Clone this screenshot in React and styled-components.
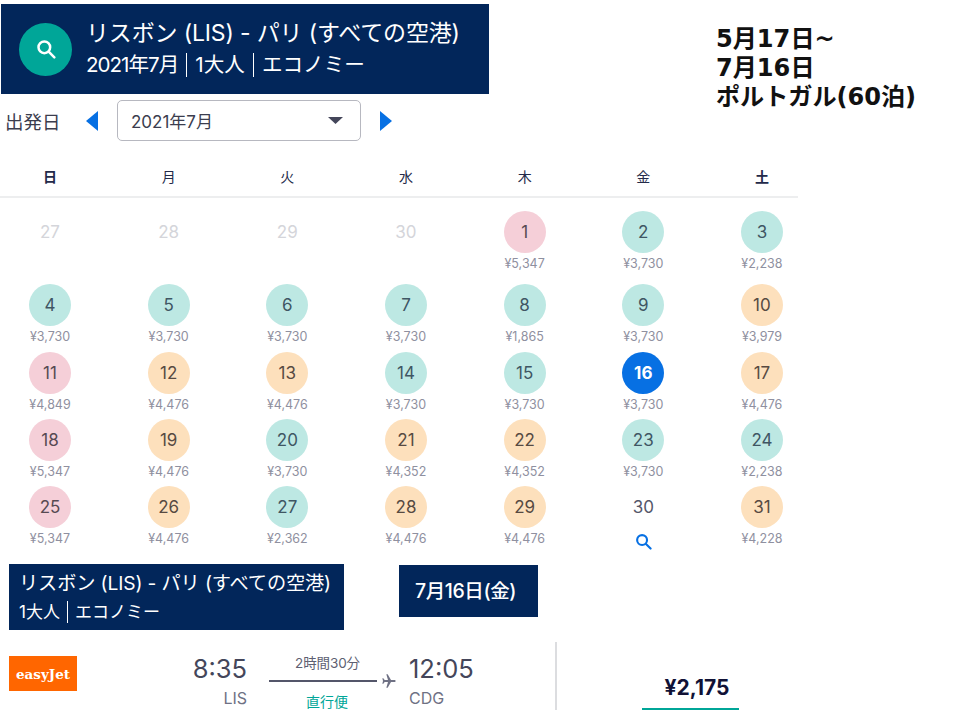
import React from "react";
import styled, { createGlobalStyle } from "styled-components";

const Global = createGlobalStyle`
  html, body { margin: 0; padding: 0; background: #fff; }
  body { font-family: Inter, "Noto Sans CJK JP", sans-serif; color: #3b3d4e; }
`;
const Page = styled.div`
  width: 960px; height: 720px; overflow: hidden; display: flex; flex-direction: column;
`;
const Top = styled.div`display: flex; align-items: flex-start;`;
const TopLeft = styled.div`width: 489px; padding-top: 4px; display: flex; flex-direction: column;`;
const Banner = styled.header`
  margin-left: 1px; height: 90px; background: #02265a; color: #fff; display: flex; align-items: center; padding-left: 18px; box-sizing: border-box;
`;
const SearchDisc = styled.div`
  width: 53px; height: 53px; border-radius: 50%; background: #00a698; display: flex; align-items: center; justify-content: center; margin-right: 14px; flex: none;
`;
const Titles = styled.div`display: flex; flex-direction: column;`;
const Title = styled.div`font-size: ${p => p.$size}px; line-height: ${p => p.$lh}px; white-space: nowrap; letter-spacing: ${p => p.$ls || 0}px; margin-left: ${p => p.$ml || 0}px;`;
const Sub = styled.div`display: flex; align-items: center; font-size: ${p => p.$size}px; line-height: ${p => p.$lh}px; white-space: nowrap; margin-left: ${p => p.$ml || 0}px;`;
const SubNum = styled.span`letter-spacing: -1px;`;
const Sep = styled.span`width: 1px; height: ${p => p.$h}px; background: #fff; margin: 0 ${p => p.$m}px;`;
const Toolbar = styled.div`display: flex; align-items: center; height: 41px; margin-top: 6px; padding-left: 5px;`;
const DepLabel = styled.span`font-size: 18.5px; width: 81px; color: #3b3d4e;`;
const Arrow = styled.svg`display: block; flex: none;`;
const Select = styled.div`
  width: 244px; height: 41px; box-sizing: border-box; margin: 0 19px; border: 1px solid #b7b8c0; border-radius: 5px; display: flex; align-items: center; justify-content: space-between; padding: 0 17px 0 13px; font-size: 17px; background: #fff;
`;
const Note = styled.div`
  margin: 25px 0 0 227px; font-size: 24.1px; font-weight: 700; line-height: 29px; color: #111; font-family: "DejaVu Sans", "Noto Sans CJK JP", sans-serif; white-space: nowrap;
`;
const Calendar = styled.section`width: 798px;`;
const WeekRow = styled.div`
  display: grid; grid-template-columns: repeat(7, 72px); column-gap: 46.67px; padding-left: 14px; box-sizing: border-box; height: 57px; align-items: center; padding-top: 15px; border-bottom: 2px solid #edeeef;
`;
const Wd = styled.div`text-align: center; font-size: 14px; font-weight: ${p => (p.$strong ? 700 : 400)}; color: #232a4a;`;
const Grid = styled.div`
  display: grid; grid-template-columns: repeat(7, 72px); column-gap: 46.67px; padding: 13px 0 0 14px; grid-template-rows: 73px 68px 67px 67px 67px;
`;
const Cell = styled.div`display: flex; flex-direction: column; align-items: center;`;
const Disc = styled.div`
  width: 42px; height: 42px; border-radius: 50%; display: flex; align-items: center; justify-content: center; font-size: 17px;
  background: ${p => p.$bg}; color: ${p => p.$fg}; font-weight: ${p => (p.$fg === "#fff" ? 700 : 400)};
`;
const Price = styled.div`font-size: 12.5px; line-height: 16px; margin-top: 3px; color: #8f90a0;`;
const SearchSlot = styled.div`height: 16px; margin-top: 5px;`;
const Bottom = styled.div`display: flex; align-items: flex-start; margin-top: 11px; padding-left: 9px;`;
const Banner2 = styled.div`
  width: 335px; height: 66px; background: #02265a; color: #fff; box-sizing: border-box; padding: 5px 0 0 10px;
`;
const DateBox = styled.div`
  width: 139px; height: 52px; box-sizing: border-box; padding: 0 6px 4px 0; margin: 1px 0 0 55px; background: #02265a; color: #fff; display: flex; align-items: center; justify-content: center; font-size: 19.5px; font-weight: 500; letter-spacing: -0.4px;
`;
const Flight = styled.div`display: flex; align-items: flex-start; padding-left: 9px; margin-top: 12px; height: 68px;`;
const Logo = styled.div`
  width: 68px; height: 35px; margin-top: 14px; background: #ff6600; color: #fff; display: flex; align-items: center; justify-content: center; font-family: "DejaVu Serif", serif; font-weight: 700; font-size: 13.5px; flex: none;
`;
const Times = styled.div`display: flex; margin-left: 110px; flex: none;`;
const TimeCol = styled.div`display: flex; flex-direction: column; align-items: ${p => p.$a}; width: ${p => p.$w}px;`;
const Clock = styled.div`font-size: 25.5px; line-height: 30px; margin-top: 12px; color: #44465a;`;
const Iata = styled.div`font-size: 16px; line-height: 20px; margin-top: 4px; color: #6f7184;`;
const Mid = styled.div`display: flex; flex-direction: column; align-items: flex-start; margin: 0 0 0 22px; width: 140px;`;
const Dur = styled.div`font-size: 13.5px; line-height: 16px; margin: 13px 0 0 26px; color: #5d5f72; letter-spacing: -0.1px;`;
const LineRow = styled.div`display: flex; align-items: center; height: 16px; margin-top: 2px;`;
const Line = styled.div`width: 108px; height: 2px; background: #54566a; margin-right: 4px;`;
const Direct = styled.div`font-size: 14px; line-height: 18px; margin: 4px 0 0 37px; color: #00a698;`;
const Divider = styled.div`width: 2px; height: 68px; background: #dcdde0; flex: none;`;
const Fare = styled.div`display: flex; flex-direction: column; align-items: center; width: 97px; margin-left: 85px; flex: none;`;
const Amount = styled.div`font-size: 21px; font-weight: 700; line-height: 26px; margin-top: 33px; padding-left: 13px; color: #111236;`;
const FareLine = styled.div`width: 97px; height: 2px; background: #00a698; margin-top: 7px;`;

const T = { bg: "#bde8e3", fg: "#3f5663" };
const O = { bg: "#fde0bc", fg: "#574a42" };
const P = { bg: "#f5cfd8", fg: "#574a52" };
const days = [
  [27], [28], [29], [30], [1, P, "5,347"], [2, T, "3,730"], [3, T, "2,238"],
  [4, T, "3,730"], [5, T, "3,730"], [6, T, "3,730"], [7, T, "3,730"], [8, T, "1,865"], [9, T, "3,730"], [10, O, "3,979"],
  [11, P, "4,849"], [12, O, "4,476"], [13, O, "4,476"], [14, T, "3,730"], [15, T, "3,730"], [16, { bg: "#0770e3", fg: "#fff" }, "3,730"], [17, O, "4,476"],
  [18, P, "5,347"], [19, O, "4,476"], [20, T, "3,730"], [21, O, "4,352"], [22, O, "4,352"], [23, T, "3,730"], [24, T, "2,238"],
  [25, P, "5,347"], [26, O, "4,476"], [27, T, "2,362"], [28, O, "4,476"], [29, O, "4,476"], [30, { bg: "transparent", fg: "#55576a" }, null, true], [31, O, "4,228"],
];
const Loupe = ({ size, color, sw }) => (
  <svg width={size} height={size} viewBox="0 0 24 24" fill="none" stroke={color} strokeWidth={sw} strokeLinecap="round">
    <circle cx="10" cy="10" r="7" />
    <path d="M15.5 15.5L22 22" />
  </svg>
);
const WEEK = ["日", "月", "火", "水", "木", "金", "土"];

export default function App() {
  return (
    <Page>
      <Global />
      <Top>
        <TopLeft>
          <Banner>
            <SearchDisc><Loupe size={20} color="#fff" sw={3} /></SearchDisc>
            <Titles>
              <Title $size={23} $lh={32} $ls={-0.15}>リスボン (LIS) - パリ (すべての空港)</Title>
              <Sub $size={20.6} $lh={32}><SubNum>2021年7月</SubNum><Sep $h={24} $m={8} />1大人<Sep $h={24} $m={8} />エコノミー</Sub>
            </Titles>
          </Banner>
          <Toolbar>
            <DepLabel>出発日</DepLabel>
            <Arrow width="12" height="20" viewBox="0 0 12 20"><path d="M12 0V20L0 10Z" fill="#0770e3" /></Arrow>
            <Select>
              2021年7月
              <svg width="15" height="7" viewBox="0 0 15 7"><path d="M0 0H15L7.500 7Z" fill="#44465a" /></svg>
            </Select>
            <Arrow width="12" height="20" viewBox="0 0 12 20"><path d="M0 0V20L12 10Z" fill="#0770e3" /></Arrow>
          </Toolbar>
        </TopLeft>
        <Note>5月17日~<br />7月16日<br />ポルトガル(60泊)</Note>
      </Top>
      <Calendar>
        <WeekRow>
          {WEEK.map((w, i) => <Wd key={w} $strong={i === 0 || i === 6}>{w}</Wd>)}
        </WeekRow>
        <Grid>
          {days.map(([n, tone, price, search], i) => (
            <Cell key={i}>
              {tone ? <Disc $bg={tone.bg} $fg={tone.fg}>{n}</Disc> : <Disc $bg="transparent" $fg="#d4d5da">{n}</Disc>}
              {price && <Price>¥{price}</Price>}
              {search && <SearchSlot><Loupe size={17} color="#0770e3" sw={3} /></SearchSlot>}
            </Cell>
          ))}
        </Grid>
      </Calendar>
      <Bottom>
        <Banner2>
          <Title $size={19.2} $lh={28} $ls={-0.12}>リスボン (LIS) - パリ (すべての空港)</Title>
          <Sub $size={17} $lh={30}>1大人<Sep $h={22} $m={7} />エコノミー</Sub>
        </Banner2>
        <DateBox>7月16日(金)</DateBox>
      </Bottom>
      <Flight>
        <Logo>easyJet</Logo>
        <Times>
          <TimeCol $a="flex-end" $w={60}>
            <Clock>8:35</Clock>
            <Iata>LIS</Iata>
          </TimeCol>
          <Mid>
            <Dur>2時間30分</Dur>
            <LineRow>
              <Line />
              <svg width="16" height="16" viewBox="0 0 24 24" fill="#6f7184"><path d="M22 12c0-1-1-1.600-2-1.600h-5L10 2H8l2.500 8.400H5.500L3.500 8H2l1 4-1 4h1.500l2-2.400H10.500L8 22h2l5-8.400h5c1 0 2-.6 2-1.600z" /></svg>
            </LineRow>
            <Direct>直行便</Direct>
          </Mid>
          <TimeCol $a="flex-start" $w={146}>
            <Clock>12:05</Clock>
            <Iata>CDG</Iata>
          </TimeCol>
        </Times>
        <Divider />
        <Fare>
          <Amount>¥2,175</Amount>
          <FareLine />
        </Fare>
      </Flight>
    </Page>
  );
}
